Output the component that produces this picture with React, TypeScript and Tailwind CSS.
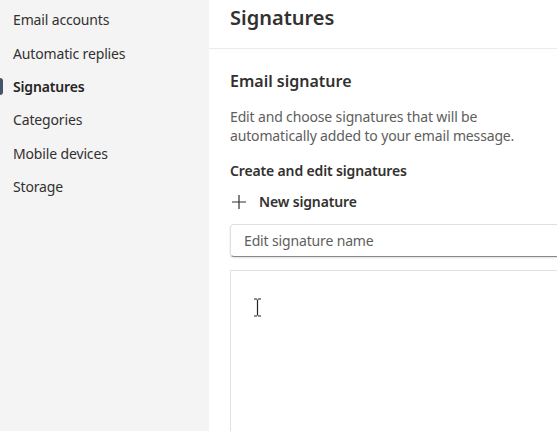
const NAV = [
  "Email accounts",
  "Automatic replies",
  "Signatures",
  "Categories",
  "Mobile devices",
  "Storage",
];

function Sidebar() {
  return (
    <nav className="w-[209px] shrink-0 bg-[#f4f4f4] pt-[3px]">
      {NAV.map((label) => {
        const active = label === "Signatures";
        return (
          <div key={label} className="relative flex h-[33.4px] items-center pl-[13px]">
            {active && <span className="absolute left-0 top-[8px] h-[17px] w-[3px] rounded-r-sm bg-[#44546a]" />}
            <span
              className={`text-[14px] tracking-[-0.15px] ${active ? "font-semibold text-[#252423]" : "text-[#323130]"}`}
            >
              {label}
            </span>
          </div>
        );
      })}
    </nav>
  );
}

function TextCursor() {
  return (
    <svg width="9" height="19" viewBox="0 0 9 19" className="text-[#222]">
      <path d="M1 1h3M5 1h3M4.5 1.5v16M1 18h3M5 18h3" stroke="currentColor" strokeWidth="1.2" fill="none" />
    </svg>
  );
}

export default function App() {
  return (
    <div className="flex h-[431px] w-[557px] overflow-hidden bg-white font-['Noto_Sans','Open_Sans',sans-serif] text-[#323130]">
      <Sidebar />
      <main className="flex min-w-0 flex-1 flex-col">
        <header className="h-[49px] shrink-0 border-b border-[#edebe9] pl-[21px] pt-[4px]">
          <h1 className="text-[20px] font-semibold leading-[28px]">Signatures</h1>
        </header>
        <section className="flex flex-1 flex-col pl-[21px] pt-[21px] tracking-[-0.15px]">
          <h2 className="text-[16px] font-semibold leading-[22px] tracking-normal">Email signature</h2>
          <p className="mt-[15px] w-[300px] text-[14px] leading-[19px] text-[#605e5c]">
            Edit and choose signatures that will be automatically added to your email message.
          </p>
          <h3 className="mt-[16px] text-[14px] font-semibold leading-[20px]">Create and edit signatures</h3>
          <button className="mt-[11px] flex items-center gap-[13px] pl-[2px] text-[14px] font-semibold leading-[20px]">
            <svg width="14" height="14" viewBox="0 0 14 14">
              <path d="M7 0v14M0 7h14" stroke="#323130" strokeWidth="1.2" />
            </svg>
            New signature
          </button>
          <div className="mt-[12px] flex h-[33px] w-[360px] shrink-0 items-center rounded-[4px] border border-[#e1dfdd] border-b-[#8a8886] pl-[13px] shadow-[0_1px_2px_rgba(0,0,0,0.12)]">
            <span className="text-[14px] text-[#605e5c]">Edit signature name</span>
          </div>
          <div className="mt-[13px] w-[360px] flex-1 border border-b-0 border-[#e1e1e1] pl-[22px] pt-[27px]">
            <TextCursor />
          </div>
        </section>
      </main>
    </div>
  );
}
